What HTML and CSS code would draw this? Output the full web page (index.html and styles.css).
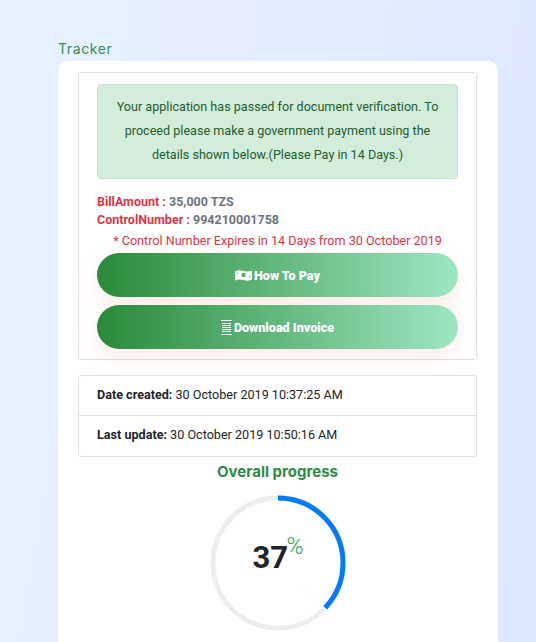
FILE: index.html
```html
<!DOCTYPE html>
<html lang="en">
<head>
    <meta charset="UTF-8">
    <meta name="viewport" content="width=device-width, initial-scale=1.0">
    <title>Tracker</title>
    <link rel="stylesheet" href="styles.css">
</head>
<body>

    <h1 class="page-title">Tracker</h1>

    <div class="card">
        <div class="box">
            <div class="alert">Your application has passed for document verification. To proceed please make a government payment using the details shown below.(Please Pay in 14 Days.)</div>

            <div class="bill">
                <p><span class="label">BillAmount :</span> 35,000 TZS</p>
                <p><span class="label">ControlNumber :</span> 994210001758</p>
            </div>
            <p class="expires">* Control Number Expires in 14 Days from 30 October 2019</p>

            <a class="pay-button" href="#">
                <svg class="icon-money" viewBox="0 0 18 12" width="17" height="12">
                    <path fill="#fff" fill-rule="evenodd" d="M0 2.2C3 .6 6 .8 9 1.7s6 1 9-.5v9.6c-3 1.6-6 1.4-9 .5s-6-1-9 .5zM9 3.6a2.4 2.4 0 1 0 0 4.8 2.4 2.4 0 0 0 0-4.8zM1.6 3.6v1.6c.9 0 1.6-.7 1.6-1.9zM14.8 8.7c0-1 .7-1.8 1.6-1.8v1.6z"/>
                </svg>
                How To Pay
            </a>
            <a class="pay-button" href="#">
                <svg class="icon-invoice" viewBox="0 0 11 15" width="11" height="15">
                    <path fill="none" stroke="#fff" stroke-width="1" d="M0 .5h11M1 3.5h9M1 5.5h9M1 7.5h9M1 9.5h9M1 11.5h9M0 14.5h11"/>
                </svg>
                Download Invoice
            </a>
        </div>

        <ul class="dates">
            <li><strong>Date created:</strong> 30 October 2019 10:37:25 AM</li>
            <li><strong>Last update:</strong> 30 October 2019 10:50:16 AM</li>
        </ul>

        <h2 class="progress-title">Overall progress</h2>

        <div class="progress">
            <svg viewBox="0 0 136 136" width="136" height="136">
                <circle cx="68" cy="68" r="65" fill="none" stroke="#eeeeee" stroke-width="5"/>
                <circle cx="68" cy="68" r="65" fill="none" stroke="#007bff" stroke-width="5" stroke-dasharray="151.1 408.4" transform="rotate(-90 68 68)"/>
                <line x1="90" y1="89" x2="113" y2="113" stroke="#eef5fd" stroke-width="0.5"/>
            </svg>
            <div class="progress-value">37<sup>%</sup></div>
        </div>
    </div>

</body>
</html>
```

FILE: styles.css
```css
body {
    font-family: Roboto, Arial, sans-serif;
    margin: 0;
    height: 642px;
    overflow: hidden;
    background: linear-gradient(100deg, #e9f2ff 0%, #dce8ff 100%);
    color: #212529;
}

.page-title {
    margin: 40px 0 4px 58px;
    font-family: Inter, sans-serif;
    font-size: 14px;
    line-height: 17px;
    font-weight: 400;
    letter-spacing: 0.6px;
    color: #3c8f4f;
}

.card {
    width: 440px;
    height: 581px;
    margin-left: 58px;
    padding: 11px 21px 0 20px;
    box-sizing: border-box;
    background-color: #fff;
    border-radius: 10px 10px 0 0;
}

.box {
    padding: 11px 18px 10px;
    border: 1px solid #dfe0e4;
    border-radius: 3px;
}

.alert {
    padding: 10px 12px;
    min-height: 95px;
    box-sizing: border-box;
    font-size: 12.6px;
    line-height: 24px;
    text-align: center;
    color: #1c5e2e;
    background-color: #d4edda;
    border: 1px solid #c3e6cb;
    border-radius: 4px;
}

.bill {
    margin-top: 14px;
    font-size: 12.5px;
    line-height: 18px;
    font-weight: 700;
    color: #6c757d;
}

.bill p {
    margin: 0;
}

.label {
    color: #dc3545;
}

.expires {
    margin: 4px 0 0;
    font-size: 12.6px;
    line-height: 16px;
    text-align: center;
    color: #dc3545;
}

.pay-button {
    display: flex;
    align-items: center;
    justify-content: center;
    gap: 2px;
    height: 44px;
    margin-top: 8px;
    font-size: 12.6px;
    font-weight: 900;
    color: #fff;
    text-decoration: none;
    background: linear-gradient(90deg, #298a39 0%, #9ee6c2 100%);
    border-radius: 22px;
    box-shadow: 0 8px 20px rgba(255, 120, 90, 0.14);
}

.expires + .pay-button {
    margin-top: 4px;
}

.dates {
    list-style: none;
    margin: 15px 0 0;
    padding: 0;
    border: 1px solid #dfe0e4;
    border-radius: 3px;
    font-size: 12.6px;
}

.dates li {
    height: 39px;
    line-height: 38px;
    padding-left: 18px;
}

.dates li + li {
    height: 40px;
    border-top: 1px solid #dfe0e4;
}

.progress-title {
    margin: 6px 0 0;
    font-family: Inter, sans-serif;
    font-size: 15px;
    line-height: 18px;
    font-weight: 700;
    text-align: center;
    color: #2e8b46;
}

.progress {
    position: relative;
    width: 136px;
    height: 136px;
    margin: 14px auto 0;
}

.progress-value {
    position: absolute;
    top: 43px;
    left: 43px;
    font-size: 31px;
    line-height: 40px;
    font-weight: 700;
}

.progress-value sup {
    position: absolute;
    top: -3px;
    left: 34px;
    font-size: 23px;
    line-height: 24px;
    font-weight: 300;
    color: #28a745;
}
```
